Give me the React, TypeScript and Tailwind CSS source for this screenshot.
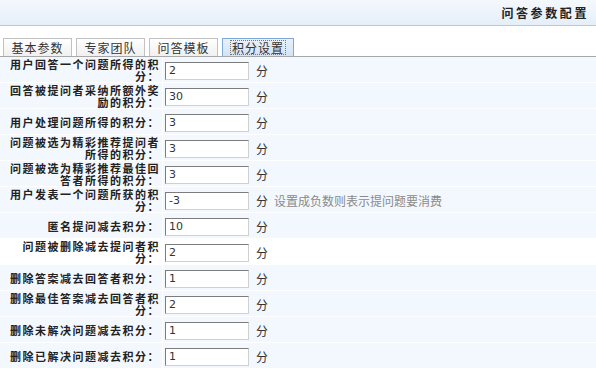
interface ScoreRow {
  lines: string[];
  value: string;
  hint?: string;
  hover?: boolean;
}

const rows: ScoreRow[] = [
  { lines: ["用户回答一个问题所得的积", "分："], value: "2" },
  { lines: ["回答被提问者采纳所额外奖", "励的积分："], value: "30" },
  { lines: ["用户处理问题所得的积分："], value: "3" },
  { lines: ["问题被选为精彩推荐提问者", "所得的积分："], value: "3" },
  { lines: ["问题被选为精彩推荐最佳回", "答者所得的积分："], value: "3" },
  { lines: ["用户发表一个问题所获的积", "分："], value: "-3", hint: "设置成负数则表示提问题要消费" },
  { lines: ["匿名提问减去积分："], value: "10" },
  { lines: ["问题被删除减去提问者积", "分："], value: "2", hover: true },
  { lines: ["删除答案减去回答者积分："], value: "1" },
  { lines: ["删除最佳答案减去回答者积", "分："], value: "2" },
  { lines: ["删除未解决问题减去积分："], value: "1" },
  { lines: ["删除已解决问题减去积分："], value: "1" },
];

const tabs = ["基本参数", "专家团队", "问答模板", "积分设置"];

const cjk = "font-['Noto_Sans_CJK_SC',sans-serif]";

export default function App() {
  return (
    <div className={`w-[596px] h-[371px] overflow-hidden bg-white text-[#222] ${cjk}`}>
      <div className="h-[26px] border-b border-[#b3cce5] bg-gradient-to-b from-[#f4f8fd] to-[#e5eff9] flex items-center justify-end pr-[7px]">
        <span className="text-[12px] font-bold tracking-[2.6px] leading-none">问答参数配置</span>
      </div>

      <div className="flex gap-[4px] pl-[3px] pt-[12px] border-b border-[#a8a8a8]">
        {tabs.map((t, i) => (
          <div
            key={t}
            className={
              i === 3
                ? "w-[72px] h-[18px] border border-b-0 border-[#7fa9da] bg-gradient-to-b from-[#e9f1fa] to-[#d3e3f5] flex items-center justify-center"
                : "w-[69px] h-[18px] border border-b-0 border-[#c2c2c2] bg-gradient-to-b from-white to-[#f0f0f0] flex items-center justify-center"
            }
          >
            <span
              className={
                i === 3
                  ? "text-[12px] leading-[13px] tracking-[1px] text-[#333] outline outline-1 outline-dotted outline-[#777] px-[1px]"
                  : "text-[12px] leading-none tracking-[1px] text-[#333]"
              }
            >
              {t}
            </span>
          </div>
        ))}
      </div>

      <div className="flex flex-col gap-px">
        {rows.map((r, i) => (
          <div key={i} className="flex gap-px h-[25px]">
            <div
              className={`w-[162px] shrink-0 flex flex-col justify-center items-end pr-[2px] ${
                r.hover ? "bg-white" : "bg-[#f3f8fe]"
              }`}
            >
              {r.lines.map((l) => (
                <span key={l} className="text-[11px] font-bold leading-[12px] tracking-[1.5px] whitespace-nowrap">
                  {l}
                </span>
              ))}
            </div>
            <div className={`flex-1 flex items-center pl-[2px] pt-[2px] ${r.hover ? "bg-white" : "bg-[#f3f8fe]"}`}>
              <div className="w-[84px] h-[18px] bg-white border border-t-[#7c7c7c] border-l-[#7c7c7c] border-r-[#d0d0d0] border-b-[#d0d0d0] flex items-center px-[3px]">
                <span className="font-['DejaVu_Sans',sans-serif] text-[11px] leading-none text-[#333]">
                  {r.value}
                </span>
              </div>
              <span className="ml-[7px] text-[12px] leading-none text-[#333]">分</span>
              {r.hint && <span className="ml-[6px] text-[12px] leading-none text-[#8a8a8a]">{r.hint}</span>}
            </div>
          </div>
        ))}
      </div>
    </div>
  );
}
